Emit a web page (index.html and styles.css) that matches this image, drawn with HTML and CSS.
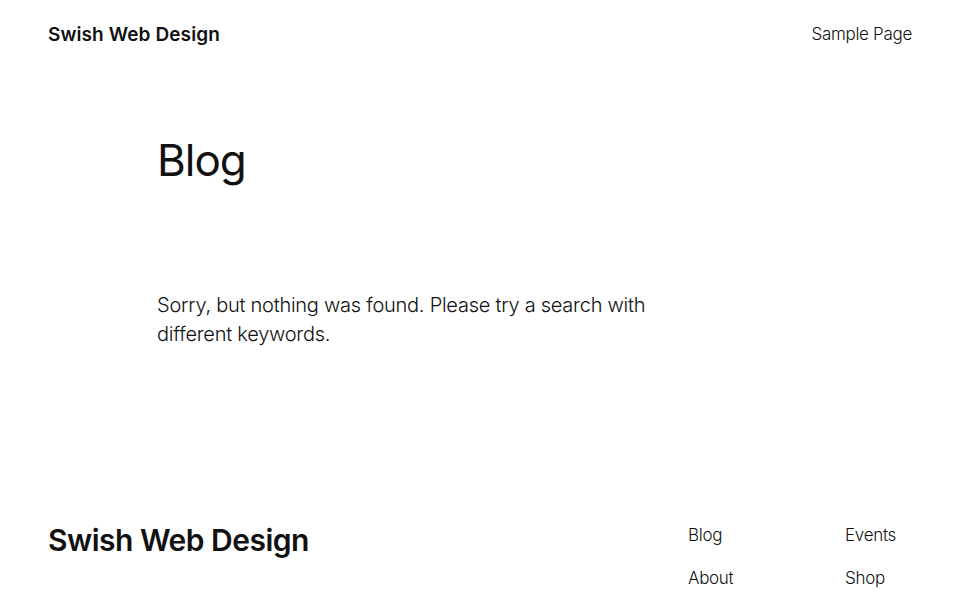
FILE: index.html
```html
<!DOCTYPE html>
<html lang="en">
<head>
<meta charset="utf-8">
<title>Blog – Swish Web Design</title>
<link rel="stylesheet" href="styles.css">
</head>
<body>
<header class="site-header">
  <a class="site-title" href="#">Swish Web Design</a>
  <nav class="top-nav"><a href="#">Sample Page</a></nav>
</header>
<main class="content">
  <h1 class="page-title">Blog</h1>
  <p class="notice">Sorry, but nothing was found. Please try a search with different keywords.</p>
</main>
<footer class="site-footer">
  <a class="footer-title" href="#">Swish Web Design</a>
  <div class="footer-nav">
    <ul class="footer-col">
      <li><a href="#">Blog</a></li>
      <li><a href="#">About</a></li>
    </ul>
    <ul class="footer-col">
      <li><a href="#">Events</a></li>
      <li><a href="#">Shop</a></li>
    </ul>
  </div>
</footer>
</body>
</html>
```
FILE: styles.css
```css
* { box-sizing: border-box; }
html, body { margin: 0; padding: 0; background: #fff; }
body {
  font-family: Inter, "Noto Sans", "DejaVu Sans", sans-serif;
  color: #111;
  -webkit-font-smoothing: antialiased;
}
a { color: inherit; text-decoration: none; }

.site-header {
  display: flex;
  justify-content: space-between;
  align-items: center;
  height: 68px;
  padding: 0 48px;
}
.site-title {
  font-size: 19px;
  font-weight: 600;
  letter-spacing: 0.1px;
}
.top-nav a {
  font-size: 17px;
  font-weight: 300;
  letter-spacing: -0.3px;
}

.content {
  width: 646px;
  margin: 0 auto;
  padding-top: 66px;
  min-height: 447px;
}
.page-title {
  margin: 0;
  font-size: 44px;
  font-weight: 400;
  line-height: 1.2;
  letter-spacing: -1px;
}
.notice {
  max-width: 530px;
  margin: 104px 0 0;
  font-size: 20px;
  font-weight: 300;
  line-height: 29px;
  letter-spacing: -0.25px;
}

.site-footer {
  display: flex;
  justify-content: space-between;
  align-items: flex-start;
  padding: 0 48px;
}
.footer-title {
  font-size: 30px;
  font-weight: 600;
  letter-spacing: -0.5px;
  line-height: 40px;
  margin-top: 5px;
}
.footer-nav {
  display: flex;
  margin-right: 16px;
  margin-top: 8px;
}
.footer-col {
  list-style: none;
  margin: 0;
  padding: 0;
  display: flex;
  flex-direction: column;
  gap: 19px;
}
.footer-col:first-child { width: 157px; }
.footer-col li {
  font-size: 17px;
  font-weight: 300;
  line-height: 24px;
  letter-spacing: -0.3px;
}
```
